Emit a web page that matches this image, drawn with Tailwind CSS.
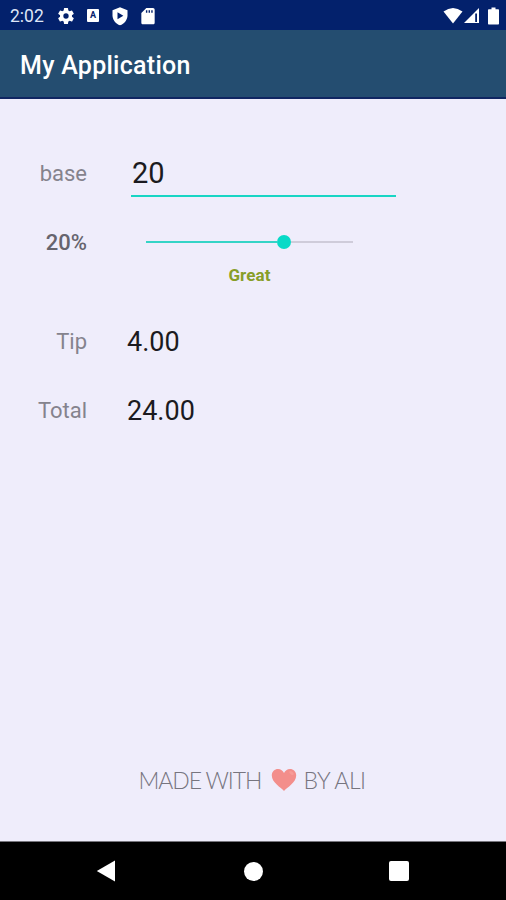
<!DOCTYPE html>
<html lang="en">
<head>
  <meta charset="UTF-8" />
  <meta name="viewport" content="width=device-width, initial-scale=1.0" />
  <title>My Application</title>
  <script src="https://cdn.jsdelivr.net/npm/@tailwindcss/browser@4"></script>
</head>
<body class="bg-[#efedfb] font-['Roboto',sans-serif] w-[506px] h-[900px] flex flex-col overflow-hidden">

  <!-- Status bar -->
  <div class="h-[30px] shrink-0 bg-[#03216c] text-white flex items-center justify-between pl-[10px] pr-[7px] pt-[1px]">
    <div class="flex items-center">
      <span class="w-[46px] text-[17.5px] leading-[20px] text-[#dfe6f7]">2:02</span>
      <svg class="w-5 h-5" viewBox="0 0 24 24" fill="currentColor"><path d="M19.14 12.94c.04-.3.06-.61.06-.94 0-.32-.02-.64-.07-.94l2.03-1.58a.49.49 0 0 0 .12-.61l-1.92-3.32a.49.49 0 0 0-.59-.22l-2.39.96c-.5-.38-1.03-.7-1.62-.94l-.36-2.54a.48.48 0 0 0-.48-.41h-3.84a.48.48 0 0 0-.47.41l-.36 2.54c-.59.24-1.13.57-1.62.94l-2.39-.96a.48.48 0 0 0-.59.22L2.74 8.87a.47.47 0 0 0 .12.61l2.03 1.58c-.05.3-.09.63-.09.94s.02.64.07.94l-2.03 1.58a.49.49 0 0 0-.12.61l1.92 3.32c.12.22.37.29.59.22l2.39-.96c.5.38 1.03.7 1.62.94l.36 2.54c.05.24.24.41.48.41h3.84c.24 0 .44-.17.47-.41l.36-2.54c.59-.24 1.13-.56 1.62-.94l2.39.96c.22.08.47 0 .59-.22l1.92-3.32a.47.47 0 0 0-.12-.61zM12 15.2A3.200 3.200 0 1 1 12 8.800a3.200 3.200 0 0 1 0 6.400z"/></svg>
      <span class="ml-[11px] w-[12px] h-[13px] rounded-[1px] bg-white text-[#03216c] text-[9px] leading-[13px] font-bold text-center">A</span>
      <svg class="ml-[11px] w-5 h-5" viewBox="0 0 24 24"><path fill="#fff" d="M12 1.5 3 5v6c0 5.5 3.8 10.600 9 12 5.200-1.400 9-6.500 9-12V5z"/><path fill="#03216c" d="M9 7.500v8.500l7-4.250z"/></svg>
      <svg class="ml-[8px] w-5 h-5" viewBox="0 0 24 24" fill="currentColor"><path fill-rule="evenodd" d="M18 2.500h-8L4 8.500v11.500c0 1.100.9 2 2 2h12c1.100 0 2-.9 2-2V4.500c0-1.100-.9-2-2-2zM9.500 5h1.700v3H9.500zM12.700 5h1.700v3h-1.700zM15.900 5h1.700v3h-1.700z"/></svg>
    </div>
    <div class="flex items-center">
      <svg class="w-[20px] h-[17px]" viewBox="0 0 20 17" fill="currentColor"><path d="M.5 4.500Q10-2.500 19.500 4.500L10 16.500z"/></svg>
      <svg class="w-[17px] h-[17px]" viewBox="0 0 17 17"><path fill="#fff" d="M16 1v15H1z"/><path fill="#03216c" d="M12.200 6.500h1.800v8.500h-1.800z"/></svg>
      <svg class="ml-[8px] w-[11px] h-[18px]" viewBox="0 0 11 18" fill="currentColor"><path d="M3.500.5h4v1.700H10c.6 0 1 .4 1 1V16.500c0 .6-.4 1-1 1H1c-.6 0-1-.4-1-1V3.200c0-.6.4-1 1-1h2.500z"/></svg>
    </div>
  </div>

  <!-- App bar -->
  <header class="h-[69px] shrink-0 bg-[#244d70] border-b-2 border-[#102662] flex items-center pl-[20px] pt-[4px]">
    <h1 class="text-white text-[25px] leading-8 font-medium tracking-[0.28px]">My Application</h1>
  </header>

  <!-- Tip form -->
  <main class="flex-1 pt-[51px] flex flex-col">
    <div class="flex h-[47px]">
      <label for="base" class="w-[87px] text-right text-[22px] leading-[47px] text-[#85838d]">base</label>
      <input id="base" type="text" value="20" class="ml-[44px] w-[265px] h-[47px] border-b-2 border-[#18d5c4] pl-[1px] pt-[1px] text-[29px] text-[#1b1a20] outline-none">
    </div>

    <div class="flex mt-[20px] h-[50px]">
      <span id="percent" class="w-[87px] text-right text-[22px] leading-[51px] font-medium text-[#66646e]">20%</span>
      <div class="ml-[59px] w-[207px] flex items-center">
        <div class="w-[131px] h-[2px] bg-[#35d4c6]"></div>
        <div class="w-[14px] h-[14px] rounded-full bg-[#08dac7]"></div>
        <div class="flex-1 h-[2px] bg-[#cfccda]"></div>
      </div>
    </div>

    <p class="-mt-[2px] ml-[146px] w-[207px] text-center text-[17px] leading-[20px] font-bold tracking-[0.1px] text-[#889e28]">Great</p>

    <div class="flex mt-[32px] h-[50px]">
      <span class="w-[87px] text-right text-[22px] leading-[50px] text-[#85838d]">Tip</span>
      <span id="tip" class="ml-[40px] text-[27px] leading-[50px] text-[#1b1a20]">4.00</span>
    </div>

    <div class="flex mt-[19px] h-[50px]">
      <span class="w-[87px] text-right text-[22px] leading-[50px] text-[#85838d]">Total</span>
      <span id="total" class="ml-[40px] text-[27px] leading-[50px] text-[#1b1a20]">24.00</span>
    </div>

    <footer class="mt-auto mb-[45px] h-[32px] flex items-center justify-center text-[23px] leading-[32px] font-light font-['Lato',sans-serif] text-[#77757f]">
      <span class="w-[124px] whitespace-nowrap tracking-[-1.1px]">MADE WITH</span>
      <svg class="ml-[8px] w-[26px] h-[24px]" viewBox="0 0 26 24"><path fill="#f38e8b" d="M13 23C10 19.500.8 14.500.8 7.500.8 3.500 3.700 1 7 1c2.800 0 5 1.700 6 4 1-2.300 3.200-4 6-4 3.300 0 6.200 2.500 6.200 6.500C25.200 14.500 16 19.500 13 23z"/><ellipse cx="20.500" cy="5" rx="2.600" ry="1.400" fill="#f79b97" transform="rotate(35 20.500 5)"/></svg>
      <span class="ml-[7px] w-[64px] whitespace-nowrap tracking-[-0.5px]">BY ALI</span>
    </footer>
  </main>

  <!-- Navigation bar -->
  <nav class="h-[59px] shrink-0 bg-black border-t border-[#77767d] flex items-center text-white">
    <svg class="ml-[96px] w-[20px] h-[22px]" viewBox="0 0 20 22" fill="currentColor"><path d="M19 .5v21L.8 11z"/></svg>
    <div class="ml-[128px] w-[19px] h-[19px] rounded-full bg-white"></div>
    <div class="ml-[126px] w-[20px] h-[20px] rounded-[2px] bg-white"></div>
  </nav>

</body>
</html>
